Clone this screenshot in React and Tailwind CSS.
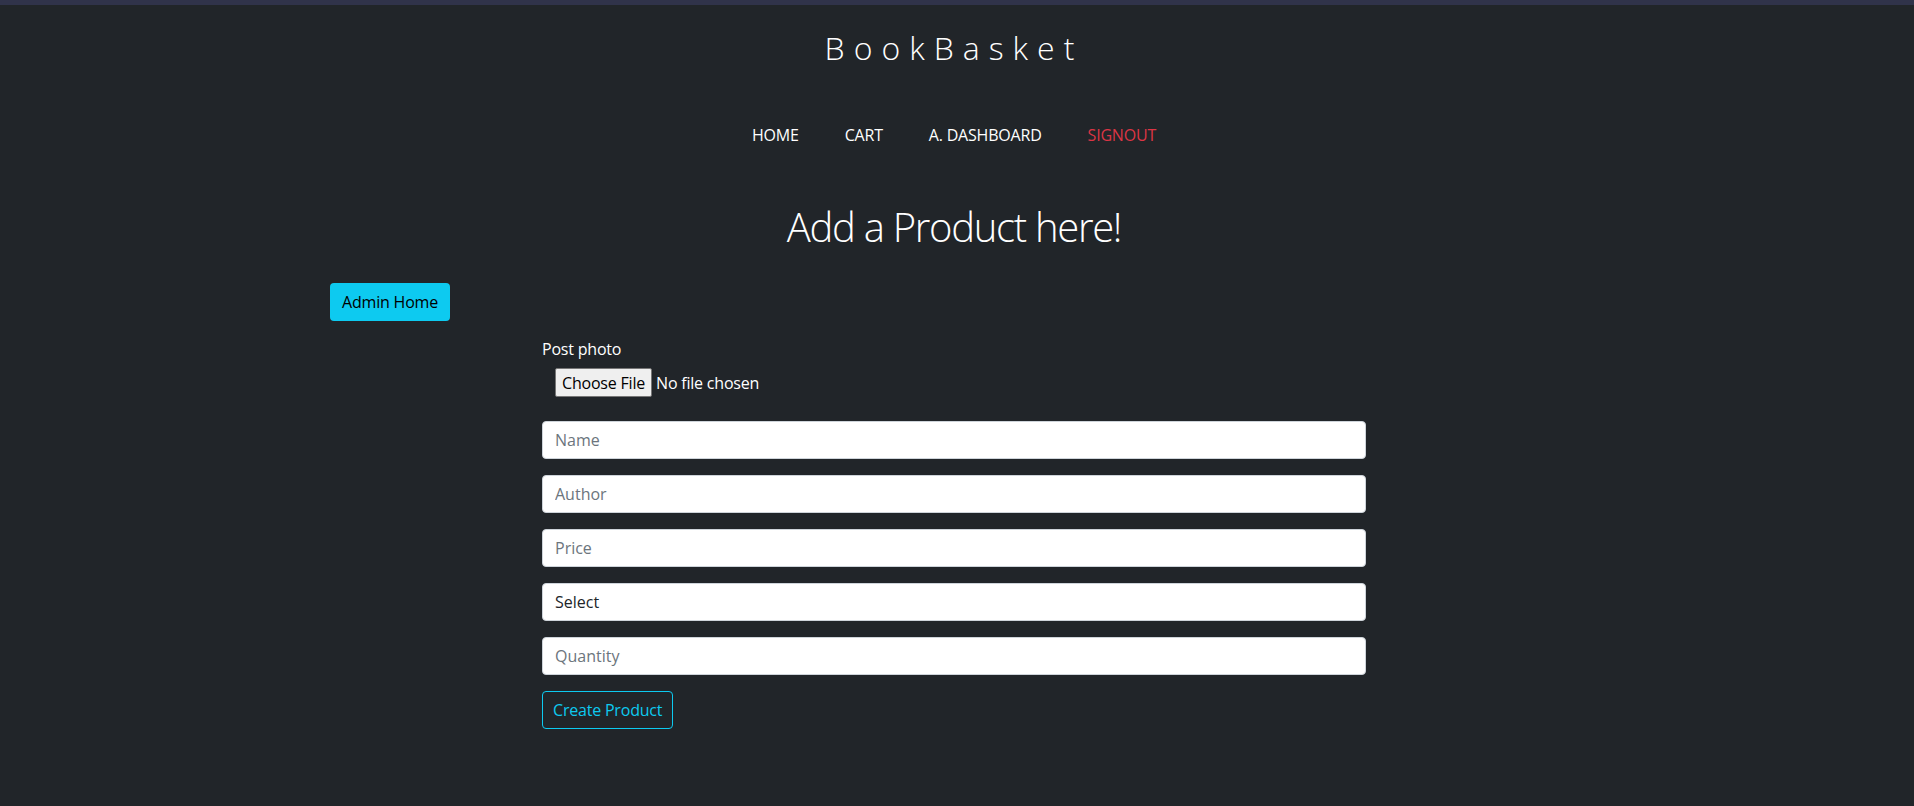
const navLinks = [
  { label: "HOME", color: "text-white" },
  { label: "CART", color: "text-white" },
  { label: "A. DASHBOARD", color: "text-white" },
  { label: "SIGNOUT", color: "text-[#dc3545]" },
];

const fields = ["Name", "Author", "Price"];

const App = () => {
  return (
    <div className="min-h-[806px] bg-[#212529] font-['Open_Sans',sans-serif] text-white">
      {/* TOP STRIP */}
      <div className="h-[5px] bg-[#30334a]" />

      <div className="ml-[330px] w-[1248px]">
        {/* BRAND */}
        <h1 className="mt-[24px] text-center text-[32px] leading-[38px] font-light tracking-[9px]">
          BookBasket
        </h1>

        {/* NAV */}
        <nav className="mt-[56px] flex justify-center text-[16px] leading-[24px] tracking-[-0.2px]">
          {navLinks.map((link) => (
            <a key={link.label} className={`px-[23px] ${link.color}`}>
              {link.label}
            </a>
          ))}
        </nav>

        {/* HEADING */}
        <h2 className="mt-14 text-center text-[40px] leading-[48px] font-light tracking-[-1.3px]">
          Add a Product here!
        </h2>

        <button className="mt-8 h-[38px] w-[120px] rounded-[4px] bg-[#0dcaf0] text-[16px] tracking-[-0.2px] text-[#000]">
          Admin Home
        </button>

        {/* FORM */}
        <form className="mx-auto w-[824px]">
          <label className="mt-4 block text-[16px] leading-[24px] tracking-[-0.2px]">
            Post photo
          </label>

          <div className="mt-[7px] ml-[13px] flex items-center gap-[4px] text-[16px] tracking-[-0.2px]">
            <span className="flex h-[29px] items-center rounded-[2px] border border-[#767676] bg-[#efefef] px-[6px] text-black">
              Choose File
            </span>
            <span>No file chosen</span>
          </div>

          <div className="mt-6 flex flex-col gap-4">
            {fields.map((f) => (
              <input
                key={f}
                placeholder={f}
                className="h-[38px] w-full rounded-[4px] border border-[#ced4da] bg-white px-3 text-[16px] text-[#212529] placeholder:text-[#6c757d] outline-none"
              />
            ))}

            <div className="flex h-[38px] w-full items-center rounded-[4px] border border-[#ced4da] bg-white px-3 text-[16px] text-[#212529]">
              Select
            </div>

            <input
              placeholder="Quantity"
              className="h-[38px] w-full rounded-[4px] border border-[#ced4da] bg-white px-3 text-[16px] text-[#212529] placeholder:text-[#6c757d] outline-none"
            />
          </div>

          <button
            type="button"
            className="mt-4 h-[38px] rounded-[4px] border border-[#0dcaf0] px-[10px] text-[16px] tracking-[-0.2px] text-[#0dcaf0]"
          >
            Create Product
          </button>
        </form>
      </div>
    </div>
  );
};

export default App;
